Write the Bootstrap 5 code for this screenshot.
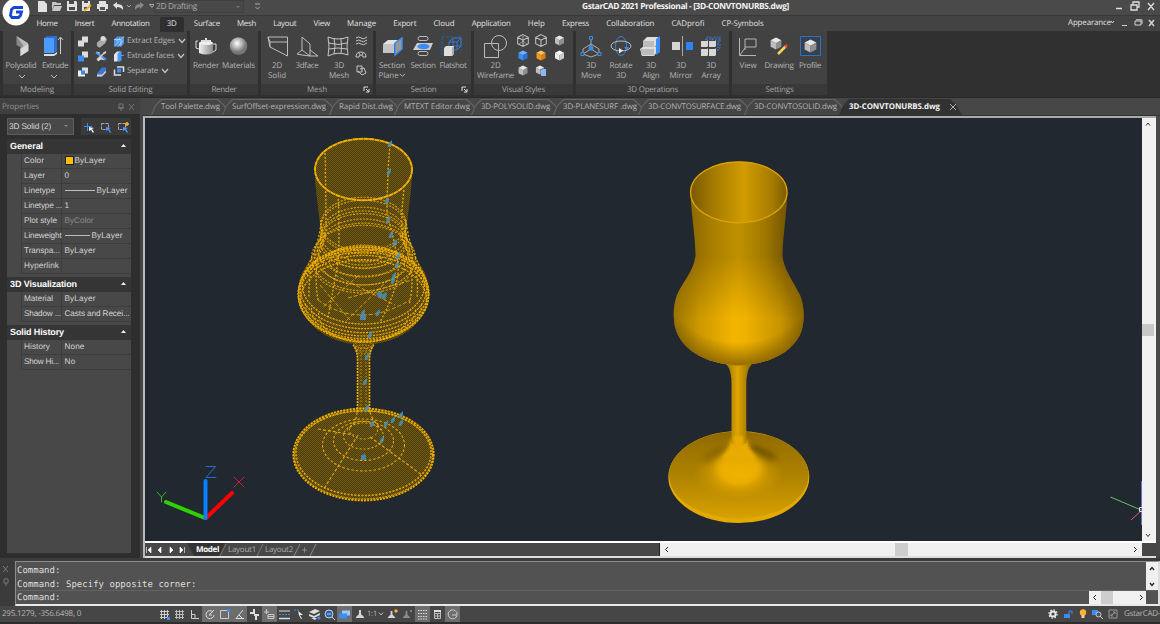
<!DOCTYPE html>
<html lang="en">
<head>
<meta charset="utf-8">
<title>GstarCAD 2021 Professional</title>
<link href="https://cdn.jsdelivr.net/npm/bootstrap@5.3.0/dist/css/bootstrap.min.css" rel="stylesheet">
<style>
*{text-rendering:geometricPrecision}
body{width:1160px;height:624px;overflow:hidden;background:#2e2e2e;color:#c9c9c9;font:8px/10px "Open Sans","Noto Sans",sans-serif}
svg{display:block;flex:none;overflow:visible}
[data-w]{display:inline-block;white-space:nowrap;flex:none}
.app-top{height:31px}
.titlebar{height:16px;background:#4a4a4a;border-bottom:1px solid #383838}
.app-logo{left:3px;top:-3px;z-index:5}
.quick{padding-left:36px;height:13px;width:262px}
.space-box{width:90px;height:13px;margin-left:-2px;padding-left:1px;background:#484848;border:1px solid #404040;color:#a8a8a8;font-size:8.3px;line-height:10px}
.app-title{color:#f2f2f2;font-weight:700;font-size:8.4px;line-height:13px;padding-left:320px}
.menubar{height:15px;background:#434343;padding-left:28px;color:#e0e0e0;font-size:7.9px;line-height:14px}
.menubar a{color:inherit;text-decoration:none;padding:1px 8.6px 0;height:14px;line-height:14px}
.menubar a.current{background:#2f2f2f;border-radius:2px 2px 0 0;padding:0 7px;margin:1px 1.6px 0;height:15px}
.ribbon{height:67px;background:#303030;padding:0 0 0 3px;gap:3px;border-bottom:1px solid #292929}
.pane{height:64px;background:#424242}
.pane-body{height:53px;color:#b4b4b4}
.pane-name{height:11px;background:#393939;color:#a5a5a5;line-height:11px;text-align:center;position:relative}
.pane-name svg{position:absolute;right:3px;top:2px}
.tool{width:30px;padding-top:4px;text-align:center;flex:none}
.tool svg{height:24px;margin-bottom:2px}
.tool span{line-height:10px}
.tool .chev{height:7px}
.w68{width:68px}.w112{width:112px}.w113{width:113px}.w95{width:95px}.w99{width:99px}.w153{width:153px}
.t28{width:28px}.t32{width:32px}.t34{width:36px}.t43{width:43px}
.edit-body{padding-top:4.5px}
.edit-row{height:15px}
.edit-row svg{margin:2px 0 0 3px}
.workrow{height:460px}
.side{width:143px;background:#2e2e2e;border-right:3px solid #454545}
.side-head{height:16px;background:#404040;color:#8f8f8f;font-size:8px;padding:1px 4px 0 2px;width:140px}
.combo-row{padding:3.5px 0 4px 7px}
.pick{width:67px;height:17px;background:#484848;border:1px solid #5c5c5c;color:#d6d6d6;font-family:"Liberation Sans",sans-serif;font-size:8.3px;padding:0 4px 1px 1px}
.pick-tools{width:50px;height:17px;background:#3a3a3a;margin-left:7px}
.props{width:124px;height:414px;margin-left:7px;background:#484848;font-family:"Liberation Sans",sans-serif;font-size:8.2px;color:#d4d4d4}
.group-head{height:15px;background:#353535;color:#fff;font-weight:700;font-size:9px;line-height:15px;padding:0 4px 0 3px}
.prop{height:15px;margin-left:14px;border-bottom:1px solid #3d3d3d;line-height:14px}
.prop>b{font-weight:400;width:41px;padding-left:2px;border-left:1px solid #3d3d3d;border-right:1px solid #3d3d3d;white-space:nowrap;flex:none}
.prop>i{font-style:normal;padding-left:2.5px;height:14px;white-space:nowrap}
.prop [data-w]{line-height:14px}
.dimmed{color:#8c8c8c}
.sect{margin-bottom:3px}
.swatch{width:9px;height:9px;background:#ffbf00;border:1px solid #222;margin-right:1px;flex:none}
.ln{height:1px;background:#bdbdbd}
.ln30{width:30px;margin-right:2px}.ln25{width:25px;margin-right:2px}
.work{width:1017px;background:#484848}
.doc-tabs{height:18px;background:#474747;padding-left:9px;color:#b2b2b2;border-bottom:1px solid #333}
.doc{height:17px;position:relative;padding:4px 0 0 9px;line-height:10px;font-size:7.9px;isolation:isolate;flex:none}
.doc::before,.doc::after{content:"";position:absolute;z-index:-1;top:1px;bottom:0;left:-1px;right:-7px;clip-path:polygon(0 100%,4px 40%,10px 0,calc(100% - 12px) 0,calc(100% - 6px) 35%,100% 100%);background:#656565}
.doc::after{top:2px;left:0;right:-6px;background:#454545}
.doc.active{color:#f4f4f4;font-weight:700;z-index:3}
.doc.active::before,.doc.active::after{background:#323232;right:-1px}
.d1{width:71px}.d2{width:107px}.d3{width:65px}.d4{width:77px}.d5{width:82px}.d6{width:85px}.d7{width:106px}.d8{width:95px}.d9{width:121px}
.frame-box{height:442px;border:2px solid #aaa;border-left-color:#bbb;border-right:0;border-bottom:0;width:1013px}
.view{width:997px;height:423px;background:#212830}
.vscroll{width:12px;height:423px;background:#f0f0f0}
.vthumb{width:12px;height:12px;background:#c8c8c8}
.edge{width:4px;border-right:2px solid #f2f2f2}
.bottom-tabs{border-top:2px solid #fff;border-bottom:2px solid #ddd;background:#474747;height:17px}
.layouts{width:514px;font-size:8px;color:#aaa;line-height:13px}
.layouts .model{background:#333;color:#fff;font-weight:700;clip-path:polygon(0 0,100% 0,calc(100% - 6px) 100%,7px 100%);padding:0 6px 0 9px;margin-left:1px}
.hscroll{width:483px;height:13px;background:#f0f0f0;border-left:1px solid #222;padding:0 4px}
.hthumb{width:13px;height:13px;background:#cdcdcd}
.cmd{height:48px;background:#3b3b3b;padding-top:3px}
.cmd-grip{width:15px;padding-top:4px}
.cmd-box{width:1145px;height:45px;border:1px solid #8d8d8d;border-right:2px solid #ddd;border-bottom:2px solid #e8e8e8;background:#525252;font:9px/13px "DejaVu Sans Mono",monospace;color:#dedede}
.cmd-line{height:14px;padding-left:1px;line-height:15px}
.history{height:28px}
.history-text{padding-top:1.5px}
.prompt{height:14px;border-top:1px solid #636363}
.cmd-box .cs{background:#f0f0f0}
.gap-corner{margin-right:12px}
.statusbar{height:18px;background:#464646;border-bottom:2px solid #2d2d2d;color:#b5b5b5;padding-left:2px}
.coord{width:155px;font-size:8px}
.st{width:15px;height:16px;display:flex;align-items:center;justify-content:center;flex:none}
.st.on{background:#6d6d6d}
.st.scale{width:18px;font-size:7.5px;justify-content:flex-start}
.scale svg{margin-left:2px}
</style>
</head>
<body>
<svg width="0" height="0" class="position-absolute">
<defs>
<symbol id="cube" viewBox="0 0 20 22"><path d="M10 1 19 5.500 10 10.500 1 5.500Z" fill="var(--a,#e6e6e6)"/><path d="M1 5.500 10 10.500V21L1 16.500Z" fill="var(--b,#bdbdbd)"/><path d="M19 5.500 10 10.500V21l9-4.500Z" fill="var(--c,#8f8f8f)"/></symbol>
<symbol id="wcube" viewBox="0 0 20 22"><path d="M10 1 19 5.500V16.500L10 21 1 16.500V5.500ZM1 5.500 10 10.500 19 5.500M10 10.500V21" fill="none" stroke="#c4c4c4" stroke-width="1.700"/></symbol>
<symbol id="dn" viewBox="0 0 8 6"><path d="M1 1 4 4.500 7 1" fill="none" stroke="#c4c4c4" stroke-width="1.200"/></symbol>
<symbol id="launch" viewBox="0 0 7 7"><path d="M1 5V1H5M3 3 6 6M6 3V6H3" fill="none" stroke="#ddd"/></symbol>
<symbol id="peer" viewBox="0 0 10 10"><path d="M4 1H6V5L9 8V9H1V8L4 5Z" fill="var(--p,#d5d5d5)"/></symbol>
<linearGradient id="gm" x2="1"><stop stop-color="#f2f2f2"/><stop offset="1" stop-color="#8b8b8b"/></linearGradient>
<radialGradient id="ball" cx=".42" cy=".35"><stop stop-color="#fff"/><stop offset=".5" stop-color="#bcbcbc"/><stop offset="1" stop-color="#777"/></radialGradient>
</defs>
</svg>

<header class="app-top position-relative">
 <svg class="app-logo position-absolute" width="28" height="29" viewBox="0 0 28 29"><circle cx="13" cy="15" r="13.500" fill="#fff"/><path d="M20 10.500H11L8.500 12.500 7.500 18.500 9 20.500H15.500L17.500 18.500 18.500 15H13" fill="none" stroke="#1746d2" stroke-width="2.800"/></svg>
 <div class="titlebar d-flex align-items-start">
  <div class="quick d-flex align-items-center">
   <svg width="120" height="13" viewBox="36 0 120 13"><g fill="#e1e1e1"><path d="M38 1h6l3 3v8h-9z"/><path d="M52 2h4l1 1h4v2h-7l-2 5zM54 6h8l-2 5h-8z" fill="#c8c8c8"/><path d="M67 1h9l1 1v9H67z"/><path d="M82 1h8v10h-8z"/><path d="M99 1h7v3h-7zM97 4h11v5h-2v2h-7V9h-2z"/><path d="M113 5l4-3v2q7 0 6 6-2-3-6-3v2z"/></g><path d="M69 1h5v3h-5zM69 7h6v3h-6zM84 1h4v2h-4zM84 7h3v3h-3z" fill="#4a4a4a"/><path d="M84 11 91 5" stroke="#f4a829" stroke-width="2"/><path d="M100 7h5v3h-5z" fill="#555"/><path d="M144 5l-4-3v2q-6 0-5 6 2-3 5-3v2z" fill="#888"/><path d="M127 5l2 2 2-2M149.500 4.500h5l-2.500 3z" stroke="#aaa" fill="none"/></svg>
   <div class="space-box d-flex align-items-center justify-content-between"><span data-w="41">2D Drafting</span><svg width="8" height="4"><path d="M1 1h4L3 3z" fill="#777"/></svg></div>
   <svg width="16" height="8"><path d="M11 1h5M11.500 4l2 2 2-2" stroke="#aaa" fill="none"/></svg>
  </div>
  <div class="app-title"><span data-w="207">GstarCAD 2021 Professional - [3D-CONVTONURBS.dwg]</span></div>
  <svg class="ms-auto" width="45" height="14" viewBox="1115 0 45 14"><path d="M1116 8.500h6M1131 5h6v5h-6zM1133 4.500V2h6v5h-2M1148 3l6 7m0-7-6 7" stroke="#dedede" stroke-width="1.300" fill="none"/></svg>
 </div>
 <nav class="menubar d-flex">
  <a><span data-w="21">Home</span></a><a><span data-w="19.500">Insert</span></a><a><span data-w="38">Annotation</span></a><a class="current"><span data-w="10">3D</span></a><a><span data-w="26">Surface</span></a><a><span data-w="19">Mesh</span></a><a><span data-w="23">Layout</span></a><a><span data-w="16.500">View</span></a><a><span data-w="29">Manage</span></a><a><span data-w="23">Export</span></a><a><span data-w="21">Cloud</span></a><a><span data-w="39">Application</span></a><a><span data-w="17">Help</span></a><a><span data-w="27">Express</span></a><a><span data-w="48">Collaboration</span></a><a><span data-w="33">CADprofi</span></a><a><span data-w="42">CP-Symbols</span></a>
  <span class="ms-auto" data-w="43">Appearance</span>
  <svg width="49" height="14" viewBox="1111 16 49 14"><path d="M1111 21l1.500 2 1.500-2M1122 25.500h5M1135 21h6v4h-6zM1136 19.800h6v4" stroke="#cfd3da" fill="none"/><path d="M1149 20l5 6m0-6-5 6" stroke="#cfd3da" stroke-width="1.500"/></svg>
 </nav>
</header>

<section class="ribbon d-flex">
 <div class="pane w68"><div class="pane-body d-flex">
  <div class="tool t34"><svg width="36" height="24" viewBox="2.500 0 36 24"><path d="M16 1 24 7 23 14 16 10z" fill="#888"/><path d="M16 1 27.500 8V16L20 21V13l3-2z" fill="#bbb"/><path d="M20 14 28 9V16L20 21z" fill="#d9d9d9"/></svg><span data-w="31">Polysolid</span><svg class="chev" width="36" height="7"><path d="M16 4l3 3 3-3" stroke="#bbb" fill="none"/></svg></div>
  <div class="tool t32"><svg width="32" height="24"><path d="M5 3 8 1H18V16L15 18H5z" fill="#2c6fd0"/><path d="M5 3H15V18H5z" fill="#4d9bff"/><path d="M5 19h10v2H5zM15 19l3-2v2l-3 2z" fill="#ddd"/><path d="M21.500 19V3M19 5 21.500 2l2.500 3" stroke="#ccc" fill="none"/></svg><span data-w="26">Extrude</span><svg class="chev" width="32" height="7"><path d="M12 4l3 3 3-3" stroke="#bbb" fill="none"/></svg></div>
 </div><div class="pane-name"><span data-w="34">Modeling</span></div></div>

 <div class="pane w113"><div class="pane-body edit-body d-flex">
  <svg width="49" height="45" viewBox="74 34.500 49 45"><g fill="#dcdcdc"><path d="M82 35h6v6h-4v4h-6v-6h4z"/><path d="M82 50h6v6h-6zM82 66h6v6h-6z"/><path d="M97 41l5-4q3-3 5 1l-2 4-5 4q-4 0-3-5z" fill="#aaa"/><circle cx="103" cy="37" r="2.500"/><path d="M96 50l4 1-1 2zM97 58l4-3 4 4-4-1-3 2zM103 51l3-1-1 3z"/></g><path d="M78 54h6v6h-6zM81 69h4v4h-4z" fill="#3a8cf7"/><path d="M78 69h3v4h4v2h-7z" fill="#eee"/><path d="M96 51 106 58" stroke="#4a9aff" stroke-width="2"/><path d="M97 58 106 50" stroke="#ccc" stroke-width="1.500"/><path d="M97 72l5-6h4v5l-4 4h-5z" fill="#3b79d0"/><path d="M97 73l5 0 4-4v2l-4 4h-5z" fill="#ccc"/>
  <path d="M114 38l3-3h7v7l-3 3h-7z" fill="#4c93ec"/><path d="M114 38h7v7M121 38l3-3M116 40l4-3M115 44l5-5M118 45l5-6" stroke="#cfe3ff" stroke-width=".7" fill="none"/><path d="M114 53l3-3h3v7l-3 3h-3z" fill="#e5e5e5"/><path d="M118 52l3-2v9l-3 1zM121 54h3" stroke="#4a9aff" fill="#4a9aff"/><path d="M117 65.500h6.500v5M121 73.500h-6.500V68" stroke="#ddd" stroke-width="1.500" fill="none"/><path d="M117 67h4v4h-4z" fill="#3a8cf7"/></svg>
  <div class="ms-1"><div class="edit-row d-flex"><span data-w="48">Extract Edges</span><svg width="8" height="6"><use href="#dn"/></svg></div><div class="edit-row d-flex"><span data-w="47">Extrude faces</span><svg width="8" height="6"><use href="#dn"/></svg></div><div class="edit-row d-flex"><span data-w="31">Separate</span><svg width="8" height="6"><use href="#dn"/></svg></div></div>
 </div><div class="pane-name"><span data-w="44">Solid Editing</span></div></div>

 <div class="pane w68"><div class="pane-body d-flex">
  <div class="tool t32"><svg width="32" height="24"><path d="M9 8h14v10q-7 3-14 0z" fill="url(#gm)"/><ellipse cx="16" cy="8" rx="7" ry="2" fill="#eee"/><path d="M11 5h10v2H11zM15 3h2v2h-2z" fill="#ddd"/><path d="M9 14 6 13V6h2M23 9h3v6l-3 2" stroke="#ddd" fill="none"/></svg><span data-w="26">Render</span></div>
  <div class="tool t32"><svg width="32" height="24"><circle cx="16.500" cy="11" r="8.800" fill="url(#ball)"/></svg><span data-w="33">Materials</span></div>
 </div><div class="pane-name"><span data-w="25">Render</span></div></div>

 <div class="pane w112"><div class="pane-body d-flex">
  <div class="tool t32"><svg width="32" height="24"><path d="M7 2H26.500V21L9 12zM7 2l2 5H26M9 7v5" stroke="#bdbdbd" fill="none"/></svg><span data-w="10">2D</span><br><span data-w="18">Solid</span></div>
  <div class="tool t28"><svg width="28" height="24"><path d="M9 2v13l8 6V9zM9 15l-5 4 5 1 8 1h8l-8-6" stroke="#bdbdbd" fill="none"/></svg><span data-w="23">3dface</span></div>
  <div class="tool t34"><svg width="36" height="24"><path d="M7 2q10 4 20 0-2 10 0 18-10-4-20 1 2-9 0-19M13 3q2 9 0 16M20 3.500q1 9 0 15M8 8q9 3 18 0M8 14q9-2 18 0" stroke="#c5c5c5" fill="none"/></svg><span data-w="10">3D</span><br><span data-w="20">Mesh</span></div>
  <svg width="13" height="46" viewBox="356 30 13 46"><path d="M355 38q3-2 5 0t6-1M355 41q3-2 5 0t6-1M355 44q3-2 5 0t6-1M355 57q0-5 5-5t5 5h-3q0-2-2-2t-2 2zM358 53l1 2m3-2-1 2M356 66h5v6h-5zM359 69l4-1 2 5-4 2-4-4" stroke="#c5c5c5" fill="none" transform="translate(0 -1)"/></svg>
 </div><div class="pane-name"><span data-w="20">Mesh</span><svg width="7" height="7"><use href="#launch"/></svg></div></div>

 <div class="pane w95"><div class="pane-body d-flex">
  <div class="tool t32"><svg width="32" height="24"><path d="M7 9 12 5H22L18 9V18H7z" fill="#e2e2e2"/><path d="M7 9h11v9H7z" fill="#c4c4c4"/><path d="M19 8 26 3V14L19 20z" fill="#999" stroke="#3a8cf7" stroke-width="1.500"/></svg><span data-w="26">Section</span><br><span data-w="20">Plane</span><svg class="d-inline-block m-0" style="height:5px" width="7" height="5" viewBox="0 0 8 6"><path d="M1 1 4 4 7 1" fill="none" stroke="#ccc"/></svg></div>
  <div class="tool"><svg width="30" height="24"><rect x="10" y="1.500" width="10" height="4" rx="2" stroke="#bbb" fill="none"/><rect x="10" y="16.500" width="10" height="4" rx="2" stroke="#bbb" fill="none"/><path d="M5 15 9 8H25l-3 7H5z" fill="#ccc"/><ellipse cx="15.500" cy="11.500" rx="6" ry="2.800" fill="#3a8cf7"/></svg><span data-w="25">Section</span></div>
  <div class="tool"><svg width="30" height="24"><path d="M4 2H23M4 2V20M23 2V15" stroke="#285fa8" stroke-dasharray="3 1" fill="none"/><path d="M11 7l4-4h8v8l-4 4h-8zM11 7h8v8M19 7l4-4M15 3v8l-4 4M15 11h8" stroke="#3979cd" fill="none"/><path d="M6 13l2-2h8v8l-2 2H6z" fill="#ddd"/><path d="M14 13l2-2v8l-2 2z" fill="#aaa"/></svg><span data-w="27">Flatshot</span></div>
 </div><div class="pane-name"><span data-w="26">Section</span><svg width="7" height="7"><use href="#launch"/></svg></div></div>

 <div class="pane w99"><div class="pane-body d-flex">
  <div class="tool t43"><svg width="43" height="24"><circle cx="25" cy="8" r="7.500" stroke="#bbb" fill="none"/><path d="M10.500 8.500h14v14h-14z" stroke="#bbb" fill="none"/></svg><span data-w="10">2D</span><br><span data-w="37">Wireframe</span></div>
  <svg width="56" height="48" viewBox="517 30 56 48"><use href="#wcube" x="517" y="33" width="12" height="13"/><path d="M523 35v5l-5 4m5-4 5 4" stroke="#bbb" fill="none" stroke-width=".7"/><use href="#wcube" x="535" y="33" width="12" height="13"/><use href="#cube" x="554" y="34" width="11" height="11"/><use href="#cube" x="517" y="49" width="12" height="11" style="--a:#6eb2ff;--b:#3a8cf7;--c:#2b70d5"/><use href="#cube" x="535" y="49" width="12" height="11" style="--a:#ffc15c;--b:#f0981f;--c:#d98110"/><use href="#cube" x="554" y="49" width="11" height="11" style="--a:#fff;--b:#eee;--c:#cdcdcd"/><use href="#cube" x="517" y="64" width="12" height="11"/><use href="#cube" x="535" y="64" width="10" height="10"/><path d="M541 69h5v6h-5zM543 68h3v3h-3z" fill="#8ab8f5"/></svg>
 </div><div class="pane-name"><span data-w="43">Visual Styles</span></div></div>

 <div class="pane w153"><div class="pane-body d-flex ps-0">
  <div class="tool"><svg width="30" height="24"><path d="M15 3v6l-8 5v5l8 3 8-3v-5l-8-5M15 14v-5M15 14l-8 5M15 14l8 5" stroke="#aaa" fill="none"/><g fill="#424242" stroke="#3a8cf7"><path d="M13.500 1.500h3v3h-3zM5 17.500h3v3H5zM22 17.500h3v3h-3z"/></g><circle cx="15" cy="13" r="2.500" fill="#3a8cf7"/></svg><span data-w="10">3D</span><br><span data-w="20">Move</span></div>
  <div class="tool"><svg width="30" height="24"><ellipse cx="15" cy="11" rx="5.500" ry="9.500" stroke="#3d7fd6" fill="none"/><ellipse cx="15" cy="11" rx="10" ry="5" stroke="#bbb" fill="none"/><path d="M13 13l4 2.500-4 3z" fill="#eee"/><path d="M18 12h5l-2 3z" fill="#3a8cf7"/></svg><span data-w="23">Rotate</span><br><span data-w="10">3D</span></div>
  <div class="tool"><svg width="30" height="24"><path d="M7 6l4-4h11v7l-4 3H7zM4 14l4-3h11l2 2v4l-3 4H6z" fill="#ddd"/><path d="M7 6h11v6H7zM5 14h13v6H5z" fill="#bbb"/><path d="M20 4l4-3v16l-4 3z" fill="#3a8cf7"/></svg><span data-w="10">3D</span><br><span data-w="17">Align</span></div>
  <div class="tool"><svg width="30" height="24"><path d="M6 7h8v8H6z" fill="#d5d5d5"/><path d="M20 7h7v8h-7z" fill="#2f82f3"/><path d="M16.500 1v20" stroke="#aaa"/></svg><span data-w="10">3D</span><br><span data-w="23">Mirror</span></div>
  <div class="tool"><svg width="30" height="24"><path d="M9 5l2-3h5v4M16 5l2-3h6v5h-3M18 9h6v4l-3 2M22 5v12M10 4h15" stroke="#3979cd" fill="none" stroke-dasharray="2 1"/><g fill="#d8d8d8"><path d="M5 6h6l1-1v6l-1 1H5zM13 6h6l1-1v6l-1 1h-6zM5 14h6l1-1v7l-1 1H5zM13 14h6l1-1v7l-1 1h-6z"/></g></svg><span data-w="10">3D</span><br><span data-w="19">Array</span></div>
 </div><div class="pane-name"><span data-w="51">3D Operations</span></div></div>

 <div class="pane w95"><div class="pane-body d-flex">
  <div class="tool t32"><svg width="32" height="24"><path d="M7.500 3v17.500H24M13 4h11v8H13zM8 20l5-7M13 12v3" stroke="#b5b5b5" fill="none"/></svg><span data-w="17">View</span></div>
  <div class="tool"><svg width="30" height="24"><use href="#cube" x="6" y="1" width="12" height="15"/><path d="M14 19 22 11" stroke="#ffd25c" stroke-width="2.500"/><path d="M21 12l2-2" stroke="#e54a37" stroke-width="2.500"/></svg><span data-w="29">Drawing</span></div>
  <div class="tool t32"><svg width="32" height="24"><path d="M6.500 1.500h20v19h-20z" fill="#393f4b" stroke="#2d70c8"/><use href="#cube" x="10" y="2" width="13" height="18"/></svg><span data-w="22">Profile</span></div>
 </div><div class="pane-name"><span data-w="28">Settings</span></div></div>
</section>

<main class="workrow d-flex">
 <aside class="side">
  <div class="side-head d-flex align-items-center"><span data-w="37">Properties</span><svg class="ms-auto" width="20" height="10"><path d="M3 2h4v4H3zM2 6h6M5 6v3M13 2l5 6m0-6-5 6" stroke="#7a7a7a" fill="none" stroke-width=".9"/></svg></div>
  <div class="combo-row d-flex">
   <div class="pick d-flex align-items-center justify-content-between"><span data-w="42">3D Solid (2)</span><svg width="5" height="4"><path d="M0 1h4L2 3z" fill="#888"/></svg></div>
   <svg class="pick-tools" width="50" height="17" viewBox="81 117 50 17"><path d="M84 125.500h8M87.500 122v8" stroke="#3d8cf0"/><path d="M89 126l5 1-2 1 2 3-1 1-2-3-2 1z" fill="#eee"/><path d="M101.500 122.500h7v6h-7zM118.500 122.500h7v6h-7z" stroke="#aaa" fill="none" stroke-dasharray="3 1"/><path d="M106 126l5 1-2 1 2 3-1 1-2-3-2 1zM123 126l5 1-2 1 2 3-1 1-2-3-2 1z" fill="#4a98ff"/><path d="M127 121v4M125 123h4" stroke="#ffb52c" stroke-width="1.500"/></svg>
  </div>
  <div class="props">
   <div class="sect"><div class="group-head d-flex align-items-center justify-content-between"><span data-w="33">General</span><svg width="6" height="4"><path d="M0 3h5L2.500 0z" fill="#eee"/></svg></div>
    <div class="prop d-flex"><b><span data-w="20">Color</span></b><i class="d-flex align-items-center"><span class="swatch"></span><span data-w="31">ByLayer</span></i></div>
    <div class="prop d-flex"><b><span data-w="21">Layer</span></b><i>0</i></div>
    <div class="prop d-flex"><b><span data-w="31">Linetype</span></b><i class="d-flex align-items-center"><span class="ln ln30"></span><span data-w="31">ByLayer</span></i></div>
    <div class="prop d-flex"><b><span data-w="38">Linetype ...</span></b><i>1</i></div>
    <div class="prop d-flex"><b><span data-w="33">Plot style</span></b><i class="dimmed"><span data-w="29">ByColor</span></i></div>
    <div class="prop d-flex"><b><span data-w="37.500">Lineweight</span></b><i class="d-flex align-items-center"><span class="ln ln25"></span><span data-w="31">ByLayer</span></i></div>
    <div class="prop d-flex"><b><span data-w="36">Transpa...</span></b><i><span data-w="31">ByLayer</span></i></div>
    <div class="prop d-flex"><b><span data-w="35">Hyperlink</span></b><i></i></div></div>
   <div class="sect"><div class="group-head d-flex align-items-center justify-content-between"><span data-w="67">3D Visualization</span><svg width="6" height="4"><path d="M0 3h5L2.500 0z" fill="#eee"/></svg></div>
    <div class="prop d-flex"><b><span data-w="29">Material</span></b><i><span data-w="31">ByLayer</span></i></div>
    <div class="prop d-flex"><b><span data-w="37">Shadow ...</span></b><i><span data-w="65">Casts and Recei...</span></i></div></div>
   <div class="sect"><div class="group-head d-flex align-items-center justify-content-between"><span data-w="54">Solid History</span><svg width="6" height="4"><path d="M0 3h5L2.500 0z" fill="#eee"/></svg></div>
    <div class="prop d-flex"><b><span data-w="26">History</span></b><i><span data-w="20">None</span></i></div>
    <div class="prop d-flex"><b><span data-w="35">Show Hi...</span></b><i><span data-w="11">No</span></i></div></div>
  </div>
 </aside>

 <div class="work">
  <div class="doc-tabs d-flex">
   <div class="doc d1"><span data-w="59">Tool Palette.dwg</span></div><div class="doc d2"><span data-w="94">SurfOffset-expression.dwg</span></div><div class="doc d3"><span data-w="54">Rapid Dist.dwg</span></div><div class="doc d4"><span data-w="66">MTEXT Editor.dwg</span></div><div class="doc d5"><span data-w="69">3D-POLYSOLID.dwg</span></div><div class="doc d6"><span data-w="74">3D-PLANESURF .dwg</span></div><div class="doc d7"><span data-w="93">3D-CONVTOSURFACE.dwg</span></div><div class="doc d8"><span data-w="83">3D-CONVTOSOLID.dwg</span></div><div class="doc active d9 d-flex"><span data-w="91">3D-CONVTONURBS.dwg</span><svg class="ms-2" width="12" height="10"><path d="M2 2l6 6m0-6-6 6" stroke="#aaa"/></svg></div>
  </div>
  <div class="frame-box">
   <div class="d-flex">
    <svg class="view" id="stage" viewBox="145 118 997 423">
     <defs>
      <pattern id="dither" width="2" height="2" patternUnits="userSpaceOnUse"><path d="M0 0h1v1H0zM1 1h1v1H1z" fill="#8a6a08"/></pattern>
      <linearGradient id="inner" x2="1"><stop stop-color="#785900"/><stop offset=".25" stop-color="#a67c00"/><stop offset=".55" stop-color="#d29d00"/><stop offset=".85" stop-color="#a57a00"/><stop offset="1" stop-color="#7d5c00"/></linearGradient>
      <linearGradient id="wall" gradientUnits="userSpaceOnUse" x1="674" x2="804"><stop stop-color="#866400"/><stop offset=".15" stop-color="#906b00"/><stop offset=".3" stop-color="#aa7f00"/><stop offset=".5" stop-color="#bf9000"/><stop offset=".7" stop-color="#a07800"/><stop offset=".87" stop-color="#735400"/><stop offset="1" stop-color="#6e5100"/></linearGradient>
      <linearGradient id="bright" gradientUnits="userSpaceOnUse" x1="674" x2="804"><stop stop-color="#9c7500"/><stop offset=".2" stop-color="#cd9900"/><stop offset=".45" stop-color="#f2b400"/><stop offset=".55" stop-color="#f0b200"/><stop offset=".82" stop-color="#c69300"/><stop offset="1" stop-color="#8c6800"/></linearGradient>
      <linearGradient id="fadein" gradientUnits="userSpaceOnUse" x1="0" x2="0" y1="256" y2="318"><stop stop-color="#fff" stop-opacity="0"/><stop offset="1" stop-color="#fff"/></linearGradient>
      <mask id="lower" maskUnits="userSpaceOnUse" x="660" y="250" width="160" height="130"><path d="M660 250h160v130H660z" fill="url(#fadein)"/></mask>
      <linearGradient id="stemg" x2="1"><stop stop-color="#9b7400"/><stop offset=".45" stop-color="#dfa500"/><stop offset="1" stop-color="#8a6600"/></linearGradient>
      <linearGradient id="footg" x2="0" y2="1"><stop stop-color="#8f6a00"/><stop offset=".5" stop-color="#ae8200"/><stop offset="1" stop-color="#d7a100"/></linearGradient>
      <radialGradient id="glow"><stop stop-color="#f8b900"/><stop offset=".35" stop-color="#ecae00" stop-opacity=".9"/><stop offset="1" stop-color="#c59300" stop-opacity="0"/></radialGradient>
      <radialGradient id="under" gradientUnits="userSpaceOnUse" cx="739" cy="255" r="112"><stop offset=".78" stop-color="#755500" stop-opacity="0"/><stop offset="1" stop-color="#755500" stop-opacity=".8"/></radialGradient>
      <filter id="soft" x="-50%" y="-100%" width="200%" height="300%"><feGaussianBlur stdDeviation="3"/></filter>
      <filter id="soft1"><feGaussianBlur stdDeviation="1.500"/></filter>
     </defs>
     <g id="wire"></g>
     <g>
      <ellipse cx="738.800" cy="477" rx="70.500" ry="46" fill="#e5aa00"/><ellipse cx="738.800" cy="475" rx="69.800" ry="43.500" fill="url(#footg)"/>
      <ellipse cx="760" cy="453" rx="17" ry="4.500" fill="#5e4400" opacity=".85" filter="url(#soft)" transform="rotate(22 760 453)"/><ellipse cx="716" cy="455" rx="14" ry="4" fill="#6b4e00" opacity=".6" filter="url(#soft)" transform="rotate(-25 716 455)"/>
      <ellipse cx="738.800" cy="474" rx="46" ry="28" fill="url(#glow)"/>
      <path d="M732 440Q730 450 718 461 708 474 738.800 482 770 474 760 461 748 450 746 440Z" fill="#eeb100" opacity=".85" filter="url(#soft)"/>
      <path d="M731.500 440Q730 450 722 457 738 472 756 457 748 450 746.300 440Z" fill="#e8ac00" filter="url(#soft1)"/>
      <path d="M726 364Q732 370 731.500 385V443Q738 449 746.300 443V385Q746 370 752 364Z" fill="url(#stemg)"/>
      <path d="M733.500 436v14h10v-14z" fill="#e6aa00" filter="url(#soft1)"/>
      <path d="M690.300 192C692 220 695.500 240 695.500 256 693 273 683 281 677 295 672 309 673 325 678 335 688 354 710 364 738.800 365.500 768 364 790 354 800 335 804.500 325 805.500 309 800 295 793 281 784 270 782.500 256 782.500 240 786 220 787.500 192Z" fill="url(#wall)"/>
      <path d="M695.500 256C693 273 683 281 677 295 672 309 673 325 678 335 688 354 710 364 738.800 365.500 768 364 790 354 800 335 804.500 325 805.500 309 800 295 793 281 784 270 782.500 256Z" fill="url(#bright)" mask="url(#lower)"/>
      <path d="M695.500 256C693 273 683 281 677 295 672 309 673 325 678 335 688 354 710 364 738.800 365.500 768 364 790 354 800 335 804.500 325 805.500 309 800 295 793 281 784 270 782.500 256Z" fill="url(#under)"/>
      <ellipse cx="738.800" cy="192.300" rx="48.300" ry="30.500" fill="url(#inner)" stroke="#e0a600" stroke-width="1.200"/>
     </g>
     <g fill="none" stroke-linecap="round"><path d="M205 518 166 502" stroke="#30d000" stroke-width="4"/><path d="M206 518 232 493" stroke="#f00" stroke-width="4"/><path d="M205.500 518V481" stroke="#0a7fff" stroke-width="4"/><path d="M157 492l4.500 5 4.500-5M161.500 497v5" stroke="#3bb22b"/><path d="M206 466.500h9.500L206 477.500h10" stroke="#1b6fd5"/><path d="M234 477l10 10m0-10-10 10" stroke="#d01d26"/></g>
     <g fill="none"><path d="M1110.500 497 1141 510" stroke="#67c56a"/><path d="M1141 511 1131 520" stroke="#d86565"/><path d="M1141.500 481v44" stroke="#6a6ad0"/><path d="M1139.500 507.500h3v4h-3z" stroke="#ddd"/></g>
    </svg>
    <div class="vscroll d-flex flex-column align-items-center justify-content-between"><svg width="12" height="10"><path d="M4 7.500 6 5l2 2.500" stroke="#333" fill="none"/></svg><div class="vthumb"></div><svg width="12" height="10"><path d="M4 3 6 5.500 8 3" stroke="#333" fill="none"/></svg></div>
    <div class="edge"></div>
   </div>
   <div class="bottom-tabs d-flex">
    <div class="layouts d-flex"><svg width="41" height="13"><path d="M1.500 4v6M6 4v6L3 7zM16 4v6l-3-3zM25 4v6l3-3zM35 4v6l3-3zM39.500 4v6" fill="#fff" stroke="#fff" stroke-width=".6"/></svg><div class="model"><span data-w="23">Model</span></div><svg width="3" height="13"><path d="M-5 13 1 1" stroke="#777"/></svg><span data-w="28">Layout1</span><svg width="9" height="13"><path d="M1 13 7 1" stroke="#777"/></svg><span data-w="28">Layout2</span><svg width="28" height="13"><path d="M1 13 7 1M17 13 23 1M9 7h5M11.500 4.500v5" stroke="#888"/></svg></div>
    <div class="hscroll d-flex align-items-center justify-content-between"><svg width="6" height="9"><path d="M4 2 1.500 4.500 4 7" stroke="#222" fill="none"/></svg><div class="hthumb"></div><svg width="6" height="9"><path d="M2 2 4.500 4.500 2 7" stroke="#222" fill="none"/></svg></div>
   </div>
  </div>
 </div>
</main>

<section class="cmd d-flex">
 <div class="cmd-grip"><svg width="15" height="26"><path d="M3 1l5 6m0-6-5 6M4 14h4v4H4zM6 18v3" stroke="#777" fill="none"/></svg></div>
 <div class="cmd-box">
  <div class="history d-flex justify-content-between"><div class="history-text"><div class="cmd-line">Command:</div><div class="cmd-line"><span data-w="179.500">Command: Specify opposite corner:</span></div></div>
   <svg class="cs" width="12" height="28"><path d="M4 8 6 5.500 8 8M4 21 6 23.500 8 21" stroke="#222" fill="none" stroke-width="1.300"/></svg></div>
  <div class="prompt d-flex justify-content-between"><div class="cmd-line">Command:</div><svg class="gap-corner cs" width="57" height="13"><path d="M12 0h12v13H12z" fill="#cdcdcd"/><path d="M7 4 4.500 6.500 7 9M51 4 53.500 6.500 51 9" stroke="#222" fill="none"/></svg></div>
 </div>
</section>

<footer class="statusbar d-flex align-items-center">
 <div class="coord"><span data-w="79">295.1279, -356.6498, 0</span></div>
 <span class="st"><svg width="11" height="11"><path d="M1 2.500h9M1 5.500h9M1 8.500h9M2.500 1v9M5.500 1v9M8.500 1v9" stroke="#ccc"/><path d="M8 8h3v3H8z" fill="#3a8cf7"/></svg></span>
 <span class="st"><svg width="11" height="11"><path d="M1 2.500h9M1 5.500h9M1 8.500h9M2.500 1v9M5.500 1v9M8.500 1v9" stroke="#bbb"/></svg></span>
 <span class="st"><svg width="11" height="11"><path d="M2.500 1v8.500H10M3 5.500h3v4" stroke="#ccc" fill="none"/></svg></span>
 <span class="st on"><svg width="11" height="11"><path d="M9 3a4 4 0 1 0 1 3M5 6l5-5M5 6h3" stroke="#ddd" fill="none"/></svg></span>
 <span class="st on"><svg width="11" height="11"><path d="M1.500 1.500h8v8h-8z" stroke="#ccc" fill="none"/><path d="M8 0h3v3H8z" fill="#3a8cf7"/></svg></span>
 <span class="st on"><svg width="11" height="11"><path d="M9 1 2 9.500h8M5 6l3 3" stroke="#ddd" fill="none"/></svg></span>
 <span class="st"><svg width="11" height="11"><path d="M1 4h4V0M5 6h5M7 6v5" stroke="#ddd" stroke-width="2" fill="none"/></svg></span>
 <span class="st on"><svg width="11" height="11"><path d="M0 3h5M2.500 0v5M4 5.500h6v4H4zM4 7.500h6" stroke="#ccc" fill="none"/></svg></span>
 <span class="st"><svg width="11" height="11"><path d="M0 2h11" stroke="#ddd"/><path d="M0 5.500h11" stroke="#3a8cf7" stroke-dasharray="2 1"/><path d="M0 9.500h11" stroke="#ddd" stroke-width="1.500"/></svg></span>
 <span class="st"><svg width="11" height="11"><path d="M0 1h6" stroke="#3a8cf7" stroke-dasharray="2 1"/><path d="M4 2l5 4-3 0 2 4-1 0-2-4z" fill="#eee"/></svg></span>
 <span class="st"><svg width="11" height="11"><path d="M0 3 6 0l5 2-6 3zM0 5l5 2 6-3v2L5 9 0 7zM2 9l4 2 2-2z" fill="#ddd"/><circle cx="10" cy="9" r="1.500" fill="#3a8cf7"/></svg></span>
 <span class="st"><svg width="11" height="11"><circle cx="5" cy="5" r="4" fill="#2465c0" stroke="#ccc"/><path d="M8 8l3 3M3 5h4" stroke="#ccc"/></svg></span>
 <span class="st on"><svg width="11" height="11"><path d="M3 1.500h8v5H3z" fill="#9cc7ff"/><path d="M0 4.500h8v5H0z" fill="#3a8cf7"/></svg></span>
 <span class="st"><svg width="10" height="10"><use href="#peer"/></svg></span>
 <span class="st scale"><span data-w="10">1:1</span><svg width="5" height="4"><path d="M0 .5 2 3 4 .5" stroke="#bbb" fill="none"/></svg></span>
 <span class="st"><svg width="11" height="11"><use href="#peer" width="9" height="11"/><circle cx="9" cy="2" r="1.700" fill="#ffad2b"/></svg></span>
 <span class="st"><svg width="11" height="11"><use href="#peer" width="9" height="11" style="--p:#8a8a8a"/><circle cx="9" cy="2" r="1" fill="#999"/></svg></span>
 <span class="st on"><svg width="11" height="11"><path d="M1 1.500h9M1 4.500h9M1 7.500h9M1 10h9" stroke="#ddd" stroke-dasharray="1.500 1"/></svg></span>
 <span class="st"><svg width="9" height="11"><path d="M1.500 1.500h6v8h-6zM2 4.500h5M2 7h5M4.500 4v5" stroke="#bbb" fill="none"/><path d="M1 1h7v2H1z" fill="#ddd"/></svg></span>
 <span class="st on"><svg width="11" height="11"><path d="M9.500 3a4.500 4.500 0 1 0 .5 3.500M5 6h5V3" stroke="#ccc" fill="none"/></svg></span>
 <div class="d-flex ms-auto">
  <span class="st"><svg width="10" height="10"><circle cx="5" cy="5" r="2.600" fill="none" stroke="#e6e6e6" stroke-width="2"/><circle cx="5" cy="5" r="4.100" fill="none" stroke="#e6e6e6" stroke-width="1.200" stroke-dasharray="1.600 1.600"/></svg></span>
  <span class="st"><svg width="10" height="10"><path d="M1 5h6v4H1z" fill="#3a8cf7"/><path d="M6 5V2h3v3" stroke="#3a8cf7" fill="none"/></svg></span>
  <span class="st"><svg width="10" height="10"><circle cx="5" cy="3.500" r="3.200" fill="#ffb22f"/><path d="M3.500 6h3v3h-3z" fill="#e8d09c"/></svg></span>
  <span class="st"><svg width="11" height="10"><path d="M0 1h6v5H0z" fill="#3a8cf7"/><circle cx="6.500" cy="5.500" r="2.500" fill="#456" stroke="#ccc"/><path d="M8 7l3 3" stroke="#ccc"/></svg></span>
  <span class="st"><svg width="10" height="10"><path d="M1 1h8v8H1zM3 7l4-4M5 3h2v2M3 5v2h2" stroke="#999" fill="none"/></svg></span>
 </div>
 <span class="ms-1 me-0" data-w="36">GstarCAD-</span>
</footer>

<script src="https://cdn.jsdelivr.net/npm/bootstrap@5.3.0/dist/js/bootstrap.bundle.min.js"></script>
<script>
// Track each label so that it fills its designed width.
document.querySelectorAll('[data-w]').forEach(function (el) {
  var w = +el.dataset.w, n = el.textContent.length;
  el.style.letterSpacing = ((w - el.getBoundingClientRect().width) / n) + 'px';
});

// Wireframe of the glass: rings stacked along the profile, plus meridians.
var CX = 363.5, out = '';
function add(s) { out += s; }
function ring(cy, rx, ry, w, dash, op) {
  add('<ellipse cx="' + CX + '" cy="' + cy + '" rx="' + rx + '" ry="' + ry + '" stroke-width="' + w + '" stroke-dasharray="' + dash + '" opacity="' + (op || 1) + '"/>');
}
function line(d, w, dash, op) { add('<path d="' + d + '" stroke-width="' + w + '" stroke-dasharray="' + dash + '" opacity="' + (op || 1) + '"/>'); }
var body = 'M314.500 169C316 200 320.500 220 320.500 233 318 250 308 262 302 273 296 288 298 303 303 313 313 332 335 342 353 344L357.500 357V408C310 411 293 435 293 455 293 480 325 500.500 363.500 500.500S434.500 480 434.500 455C434.500 435 417 411 369.500 408V357L374 344C392 342 414 332 424 313 429 303 431 288 425 273 419 262 409 250 406.500 233 406.500 220 411 200 412.500 169A49 31 0 0 0 314.500 169Z';
add('<path stroke="none" fill="#4a3d14" d="' + body + '"/><path stroke="none" fill="url(#dither)" opacity=".6" d="' + body + '"/>');
[[224,42.5],[227,42.5],[234,42.5],[238,43],[241,43.5],[248,46],[254,49],[258,52]].forEach(function (r) { ring(r[0], r[1], r[1] * .63, 1.2, '2 1.3', .8); });
[[285,61],[288,63.5],[291,65],[294,65.5],[297,65],[300,63]].forEach(function (r) { ring(r[0], r[1], r[1] * .64, 1.3, '2 1.2', .95); });
[[304,58],[308,52],[313,45]].forEach(function (r) {
  line('M' + (CX - r[1]) + ' ' + r[0] + 'A' + r[1] + ' ' + r[1] * .65 + ' 0 0 0 ' + (CX + r[1]) + ' ' + r[0], 1.1, '2 1.4', .9);
});
[[257,17,5],[259,27,9],[262,34,14],[265,41,20],[270,47,23]].forEach(function (r) { ring(r[0], r[1], r[2], 1.1, '2 1.6', .85); });
['M325 153Q326 195 326 228 325 250 307 275','M338 195Q340 230 338 262 333 290 328 318','M390 145Q387 180 387 215 396 245 398 265 400 285 380 322','M404 190Q400 220 403 240 414 265 424 285','M321 220Q320 245 303 275M406 220Q408 245 424 275','M325 235Q312 262 318 300','M400 235Q418 270 409 305','M323 240Q308 265 309 298M404 240Q420 268 417 298'].forEach(function (d) { line(d, 1.4, '2 1.8', .9); });
['M320 285 350 320M335 275 395 305M358 276 322 308M388 280 345 322M348 298 412 280M318 300Q360 330 410 300'].forEach(function (d) { line(d, 1, '4 2', .8); });
line('M353 345Q358 350 357.500 363V413M374 345Q369 350 369.500 363V413', 1.6, '2 1', 1);
line('M361 348V415M366 348V415', .9, '1.5 2', .8);
for (var y = 345; y < 352; y += 3) ring(y, 10 - (y - 345) / 2, 3, 1, '1.5 1.5', .9);
ring(454.5, 70.2, 46, 1.8, '2 1.2'); ring(453, 67.5, 42.5, 1.6, '2 1.5', .9); ring(455, 69, 44, 1, '2 1');
ring(445, 41, 26, 1.1, '2.5 2', .9); ring(441, 30, 19.5, 1.1, '2.5 2', .9); ring(436, 20, 13, 1.1, '2 2', .9); ring(430, 14, 9, 1, '2 2', .9);
line('M318 429 354 435M358 435 325 487M370 437 422 475M357 412Q357 422 347 430M370 412Q372 420 382 430', 1.2, '3 2', .9);
add('<path stroke="none" fill="#4a3d14" d="M314.500 169A49 31 0 0 1 412.500 169Z"/><path stroke="none" fill="url(#dither)" opacity=".6" d="M314.500 169A49 31 0 0 1 412.500 169Z"/>');
line('M325 153 325.700 169M390 145 388 169', 1.4, '2 1.8', .9);
ring(169.5, 48.5, 30.7, 1.9, '5 .4');
var grips = [[390,144],[389,172],[387,201],[388,220],[391,235],[395,243],[398,256],[397,265],[394,276],[393,281],[380,294],[384,296],[363,313],[378,313],[370,335],[367,357],[365,382],[367,408],[372,424],[386,424],[393,420],[401,415],[401,423],[382,440],[363,457]];
var g = grips.map(function (p) { return '<path d="M' + (p[0] - 2.5) + ' ' + (p[1] + 3) + 'l1-4 3.500-3v4l-2 3z"/>'; }).join('');
document.getElementById('wire').innerHTML = '<g fill="none" stroke="#f2b100">' + out + '</g><g fill="#4a91bd" opacity=".85">' + g + '<path d="M376 293l3-1 3 2 5-1-1 6-4-2-3 1zM361 315l2-4 1 3 2 2v4h-6v-4zM361 455h5v5h-5z"/></g>';
</script>
</body>
</html>
